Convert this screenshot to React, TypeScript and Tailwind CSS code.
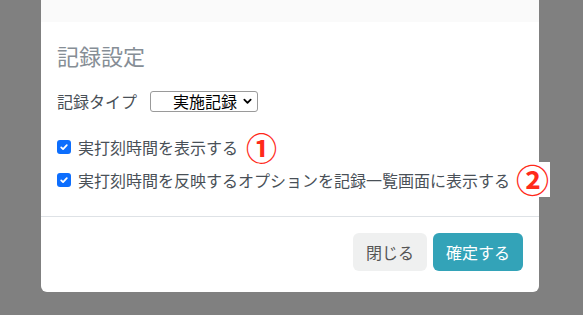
import React from "react";

const font = { fontFamily: '"Noto Sans CJK JP", "Noto Sans", sans-serif' };

function Check() {
  return (
    <span className="flex h-[14px] w-[14px] shrink-0 items-center justify-center rounded-[3px] bg-[#0d6efd]">
      <svg width="10" height="10" viewBox="0 0 16 16" fill="none">
        <path d="M3.5 8.5l3 3 6-6.5" stroke="white" strokeWidth="2.8" strokeLinecap="round" strokeLinejoin="round" />
      </svg>
    </span>
  );
}

export default function App() {
  return (
    <div className="h-[315px] w-[583px] overflow-hidden bg-[#808080]" style={font}>
      <div className="ml-[41px] flex h-[292px] w-[498px] flex-col rounded-b-[6px] bg-white">
        <div className="h-[22px] bg-[#fafafa]" />
        <div className="flex flex-col px-[16px]">
          <div className="mt-[20px] text-[22px] leading-[26px] text-[#868e96]">記録設定</div>
          <div className="mt-[22px] flex items-center">
            <span className="text-[16px] leading-[22px] text-[#495057]">記録タイプ</span>
            <span className="ml-[13px] flex h-[21px] w-[108px] items-center justify-end rounded-[3px] border border-[#9a9a9a] pr-[5px] text-[16px] leading-[20px] text-black">
              <span>実施記録</span>
              <svg className="ml-[6px]" width="9" height="7" viewBox="0 0 10 7" fill="none">
                <path d="M1.5 1.5L5 5l3.5-3.5" stroke="black" strokeWidth="2" strokeLinecap="round" strokeLinejoin="round" />
              </svg>
            </span>
          </div>
          <div className="mt-[18px] flex h-[33px] items-center">
            <Check />
            <span className="ml-[7px] text-[16px] leading-[22px] text-[#495057]">実打刻時間を表示する</span>
            <span className="ml-[8px] text-[31px] font-bold leading-[30px] text-[#ff2a1a]">①</span>
          </div>
          <div className="flex h-[33px] items-center">
            <Check />
            <span className="ml-[7px] whitespace-nowrap text-[16px] leading-[22px] text-[#495057]">
              実打刻時間を反映するオプションを記録一覧画面に表示する
            </span>
            <span className="ml-[5px] flex h-[35px] w-[35px] shrink-0 items-center justify-center bg-white text-[33px] font-bold leading-[33px] text-[#ff2a1a]">
              ②
            </span>
          </div>
        </div>
        <div className="mt-[20px] border-t border-[#dee2e6]" />
        <div className="flex justify-end gap-[6px] px-[16px] pt-[16px]">
          <button className="h-[38px] w-[74px] rounded-[6px] bg-[#eff0f0] text-[16px] text-[#555]">閉じる</button>
          <button className="h-[38px] w-[90px] rounded-[6px] bg-[#33a3b8] text-[16px] text-white">確定する</button>
        </div>
      </div>
    </div>
  );
}
